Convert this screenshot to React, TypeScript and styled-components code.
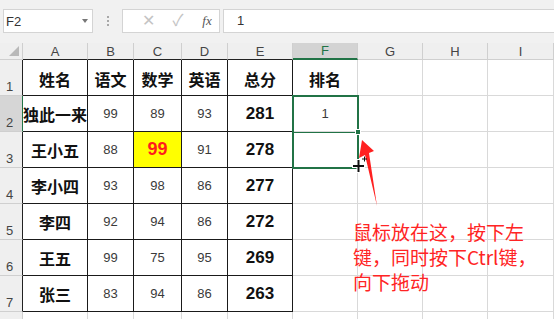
import React from "react";
import styled, { createGlobalStyle, css } from "styled-components";

const GREEN = "#217346";
const GRID = "#d9d9d9";
const HEAD_LINE = "#cfcfcf";
const CJK = `"Noto Sans CJK SC", "Liberation Sans", sans-serif`;
const LATIN = `"Liberation Sans", "Noto Sans CJK SC", sans-serif`;

const GlobalStyle = createGlobalStyle`
  html, body { margin: 0; padding: 0; background: #ffffff; }
  body { font-family: ${LATIN}; }
  * { box-sizing: border-box; }
`;

const Page = styled.div`
  position: relative;
  width: 554px;
  height: 319px;
  overflow: hidden;
  background: #ffffff;
`;

const Toolbar = styled.div`
  display: flex;
  align-items: flex-start;
  height: 43px;
  padding: 9px 0 0 3px;
  background: #f1f1f1;
`;

const NameBox = styled.div`
  display: flex;
  align-items: center;
  justify-content: space-between;
  width: 90px;
  height: 24px;
  padding: 0 4px 0 2px;
  background: #ffffff;
  border: 1px solid #d4d4d4;
  font-size: 13px;
  color: #333;
`;

const Caret = styled.span`
  width: 0;
  height: 0;
  border-left: 3px solid transparent;
  border-right: 3px solid transparent;
  border-top: 4px solid #777;
`;

const Grip = styled.div`
  display: flex;
  flex-direction: column;
  gap: 2px;
  width: 29px;
  height: 24px;
  align-items: center;
  justify-content: center;
  & > i {
    display: block;
    width: 2px;
    height: 2px;
    background: #a8a8a8;
  }
`;

const FxBox = styled.div`
  display: flex;
  align-items: center;
  width: 98px;
  height: 24px;
  padding-left: 13px;
  background: #ffffff;
  border: 1px solid #d4d4d4;
`;

const FxIcon = styled.span<{ $w: number; $dark?: boolean }>`
  width: ${(p) => p.$w}px;
  text-align: center;
  color: ${(p) => (p.$dark ? "#555" : "#c4c4c4")};
  font-size: ${(p) => (p.$dark ? "13px" : "16px")};
  font-family: ${(p) => (p.$dark ? `"Liberation Serif", serif` : LATIN)};
  font-style: ${(p) => (p.$dark ? "italic" : "normal")};
  line-height: 22px;
`;

const Formula = styled.div`
  flex: 1;
  height: 24px;
  margin-left: 3px;
  padding-left: 13px;
  background: #ffffff;
  border: 1px solid #d4d4d4;
  border-right: none;
  font-size: 13px;
  line-height: 22px;
  color: #333;
`;

const Sheet = styled.div`
  display: grid;
  grid-template-columns: 23px 65px 46px 48px 46px 65px 65px 65px 65px 66px;
  grid-template-rows: 17px repeat(7, 36px) 20px;
`;

const Corner = styled.div`
  position: relative;
  background: #efefef;
  border-right: 1px solid ${HEAD_LINE};
  border-bottom: 1px solid ${HEAD_LINE};
  &::after {
    content: "";
    position: absolute;
    right: 3px;
    bottom: 3px;
    width: 0;
    height: 0;
    border-left: 10px solid transparent;
    border-bottom: 10px solid #b9b9b9;
  }
`;

const ColHeader = styled.div<{ $active?: boolean; $edge?: boolean }>`
  display: flex;
  align-items: center;
  justify-content: center;
  font-size: 13px;
  color: #444;
  background: #efefef;
  border-right: 1px solid ${HEAD_LINE};
  border-bottom: 1px solid ${(p) => (p.$edge ? "#222" : HEAD_LINE)};
  ${(p) =>
    p.$active &&
    css`
      background: #d3d3d3;
      color: ${GREEN};
      border-bottom: 2px solid ${GREEN};
    `}
`;

const RowHeader = styled.div<{ $active?: boolean; $edge?: boolean }>`
  display: flex;
  align-items: flex-end;
  padding: 0 0 1px 6px;
  font-size: 13px;
  color: #444;
  background: ${(p) => (p.$active ? "#d6d6d6" : "#efefef")};
  border-bottom: 1px solid ${HEAD_LINE};
  border-right: 1px solid
    ${(p) => (p.$active ? GREEN : p.$edge ? "#222" : HEAD_LINE)};
`;

type Kind = "head" | "name" | "score" | "total" | "hot" | "rank" | "empty";

const kindStyles: Record<Kind, ReturnType<typeof css>> = {
  head: css`
    font-family: ${CJK};
    font-weight: 700;
    font-size: 16px;
    color: #111;
    padding-top: 3px;
  `,
  name: css`
    font-family: ${CJK};
    font-weight: 700;
    font-size: 16px;
    color: #111;
  `,
  score: css`
    font-size: 13px;
    color: #3a3a3a;
  `,
  total: css`
    font-weight: 700;
    font-size: 17px;
    color: #111;
  `,
  hot: css`
    font-weight: 700;
    font-size: 18px;
    color: #ff1c1c;
    background: #ffff00;
  `,
  rank: css`
    font-size: 13px;
    color: #3a3a3a;
  `,
  empty: css``,
};

const Cell = styled.div<{ $kind: Kind; $boxed?: boolean }>`
  display: flex;
  align-items: center;
  justify-content: center;
  white-space: nowrap;
  overflow: visible;
  background: #ffffff;
  border-right: 1px solid ${(p) => (p.$boxed ? "#1a1a1a" : GRID)};
  border-bottom: 1px solid ${(p) => (p.$boxed ? "#1a1a1a" : GRID)};
  ${(p) => kindStyles[p.$kind]}
`;

const Selection = styled.div`
  position: absolute;
  left: 292px;
  top: 95px;
  width: 67px;
  height: 74px;
  border: 2px solid ${GREEN};
  &::after {
    content: "";
    position: absolute;
    left: 0;
    right: 0;
    top: 35px;
    height: 1px;
    background: ${GREEN};
  }
`;

const Handle = styled.div`
  position: absolute;
  left: 355px;
  top: 129px;
  width: 6px;
  height: 6px;
  background: ${GREEN};
  border: 1px solid #ffffff;
`;

const Overlay = styled.svg`
  position: absolute;
  left: 345px;
  top: 132px;
  overflow: visible;
`;

const Note = styled.div`
  position: absolute;
  left: 353px;
  top: 219px;
  font-family: ${CJK};
  font-size: 19px;
  line-height: 25px;
  color: #ff2424;
  white-space: nowrap;
`;

const cols = ["A", "B", "C", "D", "E", "F", "G", "H", "I"];

const data: [string, number, number, number, number, string][] = [
  ["独此一来", 99, 89, 93, 281, "1"],
  ["王小五", 88, 99, 91, 278, ""],
  ["李小四", 93, 98, 86, 277, ""],
  ["李四", 92, 94, 86, 272, ""],
  ["王五", 99, 75, 95, 269, ""],
  ["张三", 83, 94, 86, 263, ""],
];

const heads = ["姓名", "语文", "数学", "英语", "总分", "排名"];

export default function App() {
  return (
    <Page>
      <GlobalStyle />
      <Toolbar>
        <NameBox>
          <span>F2</span>
          <Caret />
        </NameBox>
        <Grip>
          <i />
          <i />
          <i />
        </Grip>
        <FxBox>
          <FxIcon $w={24}>✕</FxIcon>
          <FxIcon $w={36}>✓</FxIcon>
          <FxIcon $w={22} $dark>
            fx
          </FxIcon>
        </FxBox>
        <Formula>1</Formula>
      </Toolbar>
      <Sheet>
        <Corner />
        {cols.map((c, i) => (
          <ColHeader key={c} $active={c === "F"} $edge={i < 5}>
            {c}
          </ColHeader>
        ))}

        <RowHeader $edge>1</RowHeader>
        {heads.map((h, i) => (
          <Cell key={h} $kind="head" $boxed={i < 5}>
            {h}
          </Cell>
        ))}
        <Cell $kind="empty" />
        <Cell $kind="empty" />
        <Cell $kind="empty" />

        {data.map((r, ri) => (
          <React.Fragment key={ri}>
            <RowHeader $active={ri === 0} $edge>
              {ri + 2}
            </RowHeader>
            <Cell $kind="name" $boxed>
              {r[0]}
            </Cell>
            <Cell $kind="score" $boxed>
              {r[1]}
            </Cell>
            <Cell $kind={ri === 1 ? "hot" : "score"} $boxed>
              {r[2]}
            </Cell>
            <Cell $kind="score" $boxed>
              {r[3]}
            </Cell>
            <Cell $kind="total" $boxed>
              {r[4]}
            </Cell>
            <Cell $kind="rank">{r[5]}</Cell>
            <Cell $kind="empty" />
            <Cell $kind="empty" />
            <Cell $kind="empty" />
          </React.Fragment>
        ))}

        <RowHeader />
        {cols.map((c) => (
          <Cell key={"r8" + c} $kind="empty" />
        ))}
      </Sheet>

      <Selection />
      <Handle />
      <Overlay width="40" height="80" viewBox="0 0 40 80">
        <polygon
          points="17,8 29,19 24,21 32,74 20,23 14,26"
          fill="#ff2020"
        />
        <g stroke="#ffffff" strokeWidth="4" strokeLinecap="square">
          <line x1="9" y1="34" x2="18" y2="34" />
          <line x1="13.5" y1="29" x2="13.5" y2="39" />
        </g>
        <g stroke="#111111" strokeWidth="2">
          <line x1="8" y1="34" x2="19" y2="34" />
          <line x1="13.5" y1="28" x2="13.5" y2="40" />
          <line x1="17" y1="27" x2="22" y2="27" strokeWidth="1" />
          <line x1="19.5" y1="24.5" x2="19.5" y2="29.5" strokeWidth="1" />
        </g>
      </Overlay>
      <Note>
        鼠标放在这，按下左
        <br />
        键，同时按下Ctrl键，
        <br />
        向下拖动
      </Note>
    </Page>
  );
}
